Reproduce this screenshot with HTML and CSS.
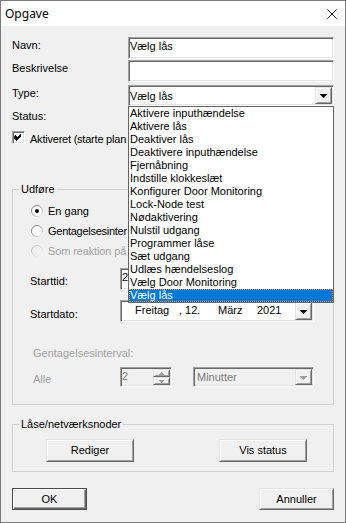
FILE: index.html
```html
<!DOCTYPE html>
<html lang="da">
<head>
<meta charset="utf-8">
<title>Opgave</title>
<link rel="stylesheet" href="styles.css">
</head>
<body>
<div class="window">
  <div class="titlebar">
    <span class="title">Opgave</span>
    <svg class="close" viewBox="0 0 10 10" width="10" height="10"><path d="M0.5 0.5L9.5 9.5M9.5 0.5L0.5 9.5" stroke="#111" stroke-width="1" fill="none"/></svg>
  </div>
  <div class="content">
    <div class="row row-navn"><span class="lbl">Navn:</span><div class="field sunken">Vælg lås</div></div>
    <div class="row row-besk"><span class="lbl">Beskrivelse</span><div class="field sunken"></div></div>
    <div class="row row-type"><span class="lbl">Type:</span>
      <div class="combo sunken"><span class="ctext">Vælg lås</span><span class="ddbtn raised"><svg width="7" height="4" viewBox="0 0 7 4"><path d="M0 0h7v1h-1v1h-1v1h-1v1h-1v-1h-1v-1h-1v-1h-1z" fill="#000"/></svg></span></div>
    </div>
    <div class="row row-status"><span class="lbl lbl-plain">Status:</span></div>
    <div class="row row-check">
      <span class="checkbox sunken"><svg width="9" height="9" viewBox="0 0 9 9"><path d="M1 2h1v1h1v1h1v-1h1v-1h1v-1h1v1h-1v1h-1v1h-1v1h-1v1h-1v-1h-1v-1h-1z" fill="#000"/><path d="M1 3h1v1h1v1h1v-1h1v-1h1v-1h1v1h-1v1h-1v1h-1v1h-1v1h-1v-1h-1v-1h-1z" fill="#000"/><path d="M1 4h1v1h1v1h1v-1h1v-1h1v-1h1v1h-1v1h-1v1h-1v1h-1v1h-1v-1h-1v-1h-1z" fill="#000"/></svg></span>
      <span class="tcheck">Aktiveret (starte plan</span>
    </div>

    <fieldset class="group g1">
      <legend>Udføre</legend>
      <div class="gbody gbody1">
        <div class="radio-row">
          <svg class="radio" width="12" height="12" viewBox="0 0 12 12"><defs><linearGradient id="rg" x1="0" y1="0" x2="1" y2="1"><stop offset="0" stop-color="#6e6e6e"/><stop offset="0.5" stop-color="#a0a0a0"/><stop offset="1" stop-color="#ffffff"/></linearGradient></defs><circle cx="6" cy="6" r="5.5" fill="#fff" stroke="url(#rg)"/><circle cx="6" cy="6" r="2" fill="#000"/></svg>
          <span>En gang</span>
        </div>
        <div class="radio-row">
          <svg class="radio" width="12" height="12" viewBox="0 0 12 12"><circle cx="6" cy="6" r="5.5" fill="#fff" stroke="url(#rg)"/></svg>
          <span class="tight">Gentagelsesinter</span>
        </div>
        <div class="radio-row disabled">
          <svg class="radio" width="12" height="12" viewBox="0 0 12 12"><defs><linearGradient id="rgd" x1="0" y1="0" x2="1" y2="1"><stop offset="0" stop-color="#b4b4b4"/><stop offset="1" stop-color="#ffffff"/></linearGradient></defs><circle cx="6" cy="6" r="5.5" fill="#f0f0f0" stroke="url(#rgd)"/></svg>
          <span class="tight2">Som reaktion på</span>
        </div>
        <div class="row row-start">
          <span class="lbl2">Starttid:</span>
          <div class="wfield sunken">2</div>
        </div>
        <div class="row row-date">
          <span class="lbl2 lbl-date">Startdato:</span>
          <div class="wfield datefield sunken">
            <span class="d1">Freitag</span><span class="d2">, 12.</span><span class="d3">März</span><span class="d4">2021</span>
            <span class="ddbtn raised date-dd"><svg width="7" height="4" viewBox="0 0 7 4"><path d="M0 0h7v1h-1v1h-1v1h-1v1h-1v-1h-1v-1h-1v-1h-1z" fill="#000"/></svg></span>
          </div>
        </div>
        <div class="row row-interval"><span class="gray">Gentagelsesinterval:</span></div>
        <div class="row row-alle">
          <span class="lbl3 gray">Alle</span>
          <div class="spin sunken disabled-field">
            <span class="spintext">2</span>
            <span class="spinbtns">
              <span class="sbtn raised"><svg width="5" height="3" viewBox="0 0 5 3"><path d="M2 0h1v1h1v1h1v1h-5v-1h1v-1h1z" fill="#a0a0a0"/></svg></span>
              <span class="sbtn raised"><svg width="5" height="3" viewBox="0 0 5 3"><path d="M0 0h5v1h-1v1h-1v1h-1v-1h-1v-1h-1z" fill="#a0a0a0"/></svg></span>
            </span>
          </div>
          <div class="mcombo sunken disabled-field">
            <span class="mtext">Minutter</span>
            <span class="ddbtn raised"><svg width="7" height="4" viewBox="0 0 7 4"><path d="M0 0h7v1h-1v1h-1v1h-1v1h-1v-1h-1v-1h-1v-1h-1z" fill="#a0a0a0"/></svg></span>
          </div>
        </div>
      </div>
    </fieldset>

    <fieldset class="group g2">
      <legend>Låse/netværksnoder</legend>
      <div class="gbody gbody2">
        <button class="btn raised">Rediger</button>
        <button class="btn raised">Vis status</button>
      </div>
    </fieldset>

    <div class="actions">
      <button class="btn btn-bottom default">OK</button>
      <button class="btn btn-bottom raised">Annuller</button>
    </div>
  </div>

  <ul class="droplist">
    <li>Aktivere inputhændelse</li>
    <li>Aktivere lås</li>
    <li>Deaktiver lås</li>
    <li>Deaktivere inputhændelse</li>
    <li>Fjernåbning</li>
    <li>Indstille klokkeslæt</li>
    <li>Konfigurer Door Monitoring</li>
    <li>Lock-Node test</li>
    <li>Nødaktivering</li>
    <li>Nulstil udgang</li>
    <li>Programmer låse</li>
    <li>Sæt udgang</li>
    <li>Udlæs hændelseslog</li>
    <li>Vælg Door Monitoring</li>
    <li class="selected">Vælg lås</li>
  </ul>
</div>
</body>
</html>
```

FILE: styles.css
```css
* { box-sizing: border-box; }
html, body { margin: 0; padding: 0; background: #f0f0f0; }
body {
  font-family: "Liberation Sans", Arial, sans-serif;
  font-size: 11px;
  line-height: 13px;
  color: #000;
}
.window {
  width: 346px;
  height: 523px;
  border: 1px solid #7a7a7a;
  background: #f0f0f0;
  position: relative;
  overflow: hidden;
}
.titlebar {
  height: 25px;
  background: #fff;
  display: flex;
  align-items: center;
  justify-content: space-between;
  padding: 0 8px 0 4px;
}
.title {
  font-family: "Noto Sans", "Open Sans", sans-serif;
  font-size: 12px;
  line-height: 16px;
}
.close { display: block; }
.content { padding: 11px 11px 0 11px; }

.row { display: flex; align-items: flex-start; }
.lbl { width: 116px; flex: none; padding-top: 2px; }
.lbl-plain { padding-top: 0; }

.tcheck { margin-left: 5px; padding-top: 2px; white-space: nowrap; letter-spacing: -0.22px; }
.tight { letter-spacing: -0.27px; }
.tight2 { letter-spacing: -0.12px; }

.sunken {
  border: 1px solid;
  border-color: #a0a0a0 #ffffff #ffffff #a0a0a0;
  box-shadow: inset 1px 1px 0 #696969, inset -1px -1px 0 #e3e3e3;
  background: #fff;
}
.raised {
  background: #f0f0f0;
  border: 1px solid;
  border-color: #e3e3e3 #696969 #696969 #e3e3e3;
  box-shadow: inset 1px 1px 0 #ffffff, inset -1px -1px 0 #a0a0a0;
}

.field { width: 206px; height: 22px; padding: 2px 1px 0 1px; }
.row-besk { margin-top: 1px; }
.row-type { margin-top: 3px; }
.combo {
  width: 206px;
  height: 21px;
  padding: 1px;
  display: flex;
  align-items: center;
  justify-content: space-between;
}
.ctext { padding-top: 1px; }
.ddbtn {
  width: 17px;
  height: 17px;
  display: flex;
  align-items: center;
  justify-content: center;
  flex: none;
}
.ddbtn svg { display: block; margin-top: 1px; }

.row-status { margin-top: 4px; height: 13px; }
.row-check { margin-top: 8px; align-items: flex-start; }
.checkbox {
  width: 13px;
  height: 13px;
  display: flex;
  align-items: center;
  justify-content: center;
  flex: none;
}
.checkbox svg { display: block; }

.group {
  margin: 0;
  padding: 0;
  border: 1px solid #d0d0d0;
  min-width: 0;
  width: 322px;
}
.group legend {
  margin-left: 6px;
  padding: 0 2px;
  line-height: 13px;
}
.g1 { margin-top: 37px; }
.gbody1 { padding: 5px 0 17px 17px; }
.radio-row {
  height: 20px;
  display: flex;
  align-items: center;
  margin-left: 1px;
  white-space: nowrap;
}
.radio { display: block; flex: none; margin-right: 5px; }
.radio-row.disabled span { color: #a0a0a0; }

.row-start { margin-top: 7px; }
.lbl2 { width: 90px; flex: none; padding-top: 7px; }
.lbl-date { padding-top: 8px; }
.wfield {
  width: 194px;
  height: 22px;
  padding: 2px 1px 0 1px;
}
.row-date { margin-top: 10px; }
.datefield {
  display: flex;
  align-items: flex-start;
  padding: 1px;
}
.datefield .d1 { margin-left: 13px; width: 44px; padding-top: 2px; }
.datefield .d2 { width: 39px; padding-top: 2px; }
.datefield .d3 { width: 39px; padding-top: 2px; }
.datefield .d4 { padding-top: 2px; }
.date-dd { margin-left: auto; height: 18px; }

.gray { color: #a0a0a0; }
.row-interval { margin-top: 25px; padding-left: 3px; height: 13px; }
.row-alle { margin-top: 7px; }
.lbl3 { width: 87px; margin-left: 3px; flex: none; padding-top: 6px; }
.disabled-field { background: #f0f0f0; color: #7a7a7a; }
.spin {
  width: 52px;
  height: 20px;
  padding: 1px;
  display: flex;
  align-items: stretch;
}
.spintext { flex: 1; padding-top: 1px; }
.spinbtns { width: 17px; display: flex; flex-direction: column; }
.sbtn {
  flex: 1;
  display: flex;
  align-items: center;
  justify-content: center;
}
.sbtn svg { display: block; }
.mcombo {
  width: 121px;
  height: 20px;
  margin-left: 21px;
  padding: 1px;
  display: flex;
  align-items: center;
  justify-content: space-between;
}
.mtext { padding-left: 2px; }
.mcombo .ddbtn { height: 16px; }

.g2 { margin-top: 13px; }
.gbody2 {
  padding: 8px 0 9px 33px;
  display: flex;
  gap: 85px;
}
.btn {
  font-family: "Liberation Sans", Arial, sans-serif;
  font-size: 11px;
  line-height: 13px;
  color: #000;
  width: 88px;
  height: 23px;
  padding: 0;
  margin: 0;
  display: block;
  text-align: center;
}
.actions {
  margin-top: 16px;
  display: flex;
  justify-content: space-between;
}
.btn-bottom { width: 75px; height: 22px; }
.default {
  background: #f0f0f0;
  border: 1px solid #4a4a4a;
  box-shadow: inset 1px 1px 0 #ffffff, inset -1px -1px 0 #696969, inset -2px -2px 0 #a0a0a0;
}

.droplist {
  position: absolute;
  left: 127px;
  top: 105px;
  width: 206px;
  margin: 0;
  padding: 0;
  list-style: none;
  background: #fff;
  border: 1px solid #646464;
}
.droplist li {
  height: 13px;
  line-height: 13px;
  padding-left: 1px;
  white-space: nowrap;
}
.droplist li.selected {
  background: #0078d7;
  color: #fff;
  outline: 1px dotted #ff8728;
  outline-offset: -1px;
}
```
